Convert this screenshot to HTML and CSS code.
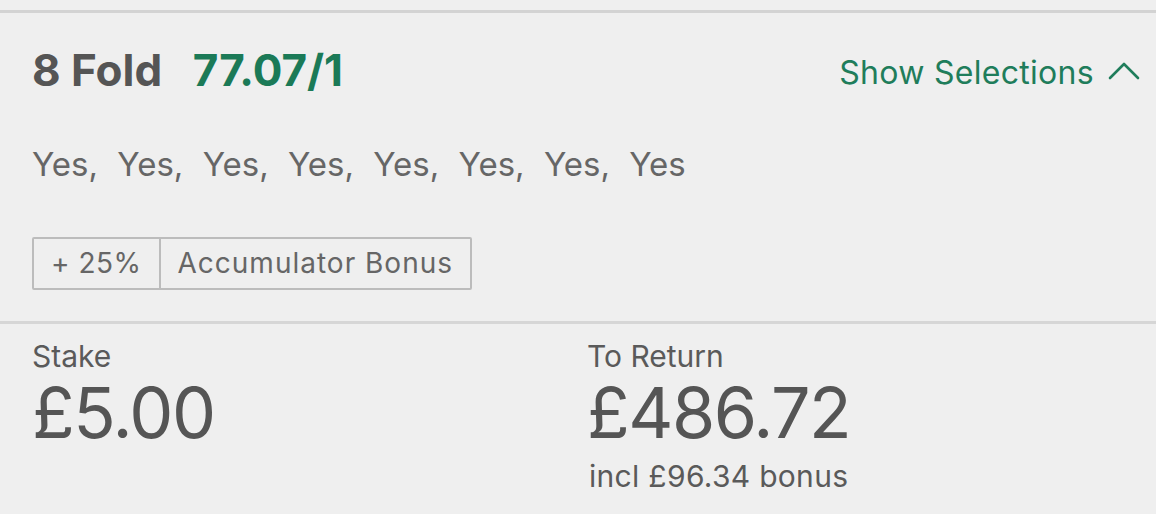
FILE: index.html
```html
<!DOCTYPE html>
<html lang="en">
<head>
    <meta charset="UTF-8">
    <meta name="viewport" content="width=device-width, initial-scale=1.0">
    <title>Bet Slip</title>
    <link rel="stylesheet" href="styles.css">
</head>
<body>
    <div class="bet">
        <div class="bet-head">
            <h2 class="bet-title">8 Fold <span class="odds">77.07/1</span></h2>
            <a class="toggle" href="#">
                Show Selections
                <svg class="chevron" width="32" height="20" viewBox="0 0 32 20">
                    <polyline points="2,18 16,4 30,18" fill="none" stroke="currentColor" stroke-width="2.6" stroke-linecap="round" stroke-linejoin="round"/>
                </svg>
            </a>
        </div>

        <p class="selections">Yes, Yes, Yes, Yes, Yes, Yes, Yes, Yes</p>

        <div class="bonus">
            <span class="bonus-pct">+ 25%</span>
            <span class="bonus-label">Accumulator Bonus</span>
        </div>
    </div>

    <div class="totals">
        <div class="total">
            <div class="total-label">Stake</div>
            <div class="total-amount">£5.00</div>
        </div>
        <div class="total">
            <div class="total-label">To Return</div>
            <div class="return-wrap">
                <div class="total-amount">£486.72</div>
                <div class="total-note">incl £96.34 bonus</div>
            </div>
        </div>
    </div>
</body>
</html>
```

FILE: styles.css
```css
body {
    font-family: Inter, "Liberation Sans", Arial, sans-serif;
    background-color: #efefef;
    color: #555;
    margin: 0;
    padding: 0;
}

.bet {
    margin-top: 10px;
    border-top: 3px solid #d3d3d3;
    border-bottom: 3px solid #d6d6d6;
    padding: 0 32px 31px;
}

.bet-head {
    display: flex;
    justify-content: space-between;
    align-items: center;
    padding-top: 30px;
}

.bet-title {
    margin: 0;
    font-size: 44px;
    font-weight: 700;
    color: #555;
    line-height: 54px;
}

.odds {
    color: #1b7a57;
    margin-left: 20px;
}

.toggle {
    display: flex;
    align-items: center;
    gap: 14px;
    color: #1f7d5b;
    text-decoration: none;
    font-size: 32px;
    letter-spacing: 0.3px;
    margin-top: 4px;
    margin-right: -16px;
}

.chevron {
    margin-top: -4px;
}

.selections {
    margin: 47px 0 0;
    font-size: 33px;
    line-height: 40px;
    color: #666;
    word-spacing: 10px;
}

.bonus {
    display: inline-flex;
    margin-top: 53px;
    border: 2px solid #bcbcbc;
    border-radius: 2px;
    font-size: 28px;
    color: #666;
    line-height: 49px;
}

.bonus-pct {
    padding: 0 17px;
    border-right: 2px solid #bcbcbc;
    letter-spacing: 0.5px;
}

.bonus-label {
    padding: 0 17px;
    letter-spacing: 1px;
}

.totals {
    display: grid;
    grid-template-columns: 555px 1fr;
    padding: 15px 32px 0;
}

.total-label {
    font-size: 30px;
    line-height: 34px;
    color: #5a5a5a;
}

.total-amount {
    font-size: 70px;
    line-height: 80px;
    font-weight: 400;
    color: #555;
    letter-spacing: -1.5px;
}

.return-wrap {
    display: inline-flex;
    flex-direction: column;
    align-items: center;
}

.total-note {
    font-size: 30px;
    line-height: 34px;
    color: #5a5a5a;
    letter-spacing: 0.3px;
    margin-top: 6px;
}
```
